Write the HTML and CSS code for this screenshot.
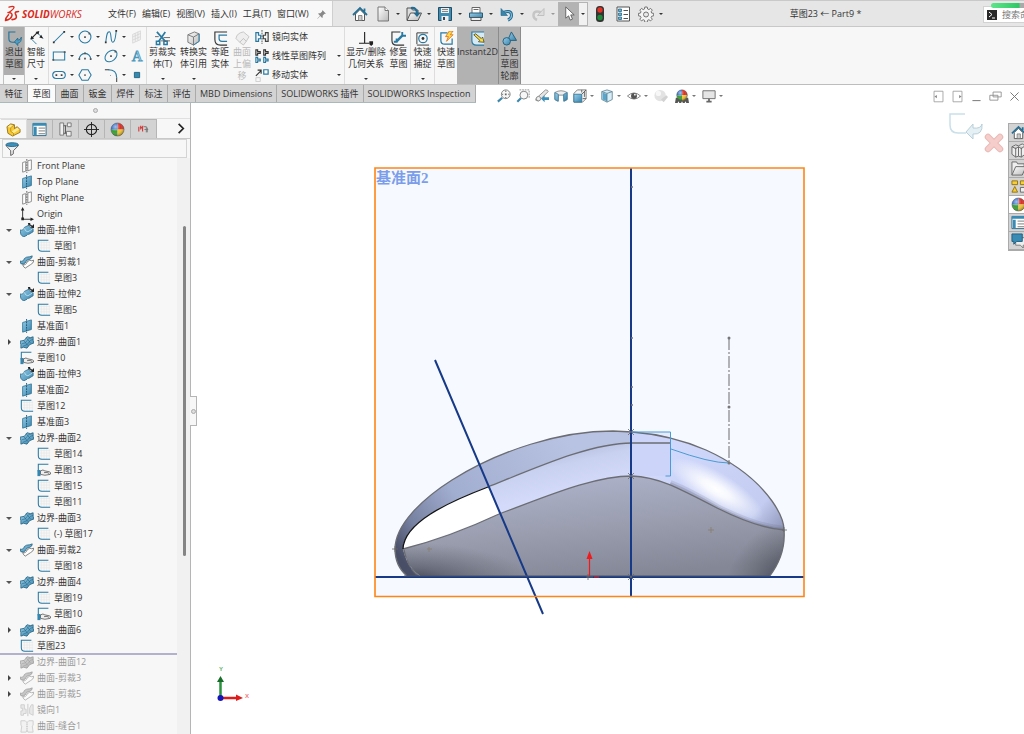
FILE: index.html
```html
<!DOCTYPE html>
<html lang="zh-CN">
<head>
<meta charset="utf-8">
<title>草图23 ← Part9 *</title>
<link rel="stylesheet" href="styles.css">
</head>
<body>
<svg class="sprite" aria-hidden="true">
  <defs>
    <linearGradient id="g-blue" x1="0" y1="0" x2="1" y2="1"><stop offset="0" stop-color="#9bcfea"/><stop offset="1" stop-color="#3783ab"/></linearGradient>
    <linearGradient id="g-grey" x1="0" y1="0" x2="1" y2="1"><stop offset="0" stop-color="#ffffff"/><stop offset="1" stop-color="#b9b9b9"/></linearGradient>
    <radialGradient id="g-shine" cx=".35" cy=".3" r=".75"><stop offset="0" stop-color="#fff" stop-opacity=".6"/><stop offset=".5" stop-color="#fff" stop-opacity="0"/><stop offset="1" stop-color="#000" stop-opacity=".4"/></radialGradient>
  </defs>
  <symbol id="ds" viewBox="0 0 16 18"><g fill="none" stroke="#d92a1c" stroke-linecap="round" stroke-linejoin="round"><path stroke-width="1.3" d="M5 2.200Q9 .8 10 2Q10.500 3.600 5 7.500"/><path stroke-width="1.500" d="M4 7.500Q8.500 7.500 8 10.500Q7 14.500 1.500 15.500Q1.500 13 4.500 9.800"/><path stroke-width="1.600" d="M14.500 6.500Q10.800 6.500 11.300 8.500L12.300 11Q13 14.500 8 14.600"/></g></symbol>
  <symbol id="home" viewBox="0 0 16 16"><path fill="#fff" stroke="#555" d="M3.500 8v6.500h9V8L8 3.500z"/><path fill="none" stroke="#256f94" stroke-width="1.800" d="M1 9l7-7 7 7M12.500 5.500V2.500"/><path fill="#ccc" stroke="#666" stroke-width=".7" d="M6.500 9.500h3.500v5H6.500z"/></symbol>
  <symbol id="new" viewBox="0 0 16 16"><path fill="url(#g-grey)" stroke="#777" d="M3 1h7l3.500 3.500V15H3z"/><path fill="#fff" stroke="#777" d="M10 1v3.500h3.500"/></symbol>
  <symbol id="open" viewBox="0 0 16 16"><path fill="#ddd" stroke="#555" d="M1 14V2h4l1.500 2H12v3"/><path fill="url(#g-grey)" stroke="#555" d="M1 14.500L4.500 7h11L12 14.500z"/><path fill="none" stroke="#236d94" stroke-width="2" d="M5 2q6-1 6 6"/><path fill="#236d94" d="M7.500 7h7L11 11z"/></symbol>
  <symbol id="save" viewBox="0 0 16 16"><path fill="#3f8cb0" stroke="#244e65" d="M1.500 1.500h13v13h-13z"/><path fill="#eee" d="M4 2h8v5H4zM4.500 10h7v5h-7z"/><path stroke="#888" d="M5 3.500h6M5 5.500h6"/><path fill="#345" d="M6 11h2v3H6z"/></symbol>
  <symbol id="print" viewBox="0 0 16 16"><path fill="#fff" stroke="#666" d="M4 7V1.500h8V7M5.500 3.500h5"/><path fill="url(#g-blue)" stroke="#285b75" d="M1.500 7h13v4.500h-13z"/><path fill="#eee" stroke="#555" d="M3 11.500h10v3H3z"/></symbol>
  <symbol id="undo" viewBox="0 0 16 16"><path fill="none" stroke="#20678c" stroke-width="3" d="M4.500 6.500q8-3 8 3q0 3-3.500 4.500"/><path fill="none" stroke="#7fbfe0" stroke-width="1.200" d="M4.500 6.500q8-3 8 3q0 3-3.500 4.500"/><path fill="#3984ab" stroke="#20678c" stroke-width=".6" d="M2 2.500v7h6.500z"/></symbol>
  <symbol id="redo" viewBox="0 0 16 16"><path fill="none" stroke="#c5c5c5" stroke-width="2.500" d="M11.500 6.500q-8-3-8 3q0 3 3.500 4.500"/><path fill="#ddd" stroke="#c0c0c0" d="M14 2.500v7H7.500z"/></symbol>
  <symbol id="cursor" viewBox="0 0 16 16"><path fill="#fff" stroke="#555" stroke-width=".9" d="M4 1v12l3-2.500 1.800 4.500 2.400-1L9.300 9.500H13z"/></symbol>
  <symbol id="traffic" viewBox="0 0 16 16"><rect x="4" y="0" width="8" height="16" rx="3.500" fill="#333"/><circle cx="8" cy="4" r="2.700" fill="#e43224"/><circle cx="8" cy="11.500" r="2.700" fill="#1c8b3a"/></symbol>
  <symbol id="list" viewBox="0 0 16 16"><path fill="#fff" stroke="#555" d="M2 1h12.500v14H2z"/><path fill="#73b3d0" stroke="#286a89" stroke-width=".8" d="M3.500 3h3v2.500h-3zM3.500 7h3v2.500h-3zM3.500 11h3v2.500h-3z"/><path stroke="#555" d="M8.500 4.500H13M8.500 8.500H13M8.500 12.500H13"/></symbol>
  <symbol id="gear" viewBox="0 0 16 16"><path fill="#f4f4f4" stroke="#666" stroke-width=".9" stroke-linejoin="round" d="M6.800 1h2.400l.4 2 1.300.6 1.700-1.200 1.700 1.700-1.200 1.700.6 1.300 2 .3v2.400l-2 .4-.6 1.300 1.200 1.700-1.700 1.700-1.700-1.200-1.300.6-.4 2H6.800l-.3-2-1.300-.6-1.700 1.200-1.700-1.700 1.200-1.700-.6-1.300-2-.4V7.400l2-.3.600-1.300-1.200-1.700 1.700-1.700 1.700 1.200 1.300-.6z"/><circle cx="8" cy="8.500" r="2.500" fill="#e8e8e8" stroke="#666" stroke-width=".9"/></symbol>
  <symbol id="pin" viewBox="0 0 16 16"><path fill="#888" d="M9 2l5 5-1 1-1-.3-3 3 .2 2.500-1 1-3-3L1 15.500.5 15l4.300-4.300-3-3 1-1 2.500.2 3-3L8 3z"/></symbol>
  <symbol id="exit" viewBox="0 0 16 16"><path fill="none" stroke="#21739c" stroke-width="1.200" d="M9 1H2v7q0 4 4 4h4"/><path fill="#4f9dc4" stroke="#1d658a" stroke-width=".8" d="M8 11.500l3.500-4v2.300q3 0 3.800-3.300.5 6-3.800 6.500v2.500z"/></symbol>
  <symbol id="dim" viewBox="0 0 16 16"><path fill="none" stroke="#2d7ba2" d="M2 8l6 6M8.500 1.500L15 8"/><path stroke="#222" stroke-width="1.200" d="M3 7.500l6-6"/><path fill="#222" d="M1.500 9l1-4 3 3zM11 0L7 1l3 3z"/><path fill="#222" d="M13 4l2 4-4-1z"/></symbol>
  <symbol id="line" viewBox="0 0 16 16"><path stroke="#287aa2" stroke-width="1.200" d="M2 14L14 2"/><path fill="#333" d="M1 13h2v2H1zM13 1h2v2h-2z"/></symbol>
  <symbol id="circle" viewBox="0 0 16 16"><circle cx="8" cy="8" r="6.800" fill="none" stroke="#287aa2" stroke-width="1.200"/><path fill="#555" d="M7 7h2v2H7zM12 3h2v2h-2z"/></symbol>
  <symbol id="spline" viewBox="0 0 16 16"><path fill="none" stroke="#287aa2" stroke-width="1.200" d="M2 14C3 7 3 2 6 2s1 12 4 12 3-6 4-13"/><path fill="#333" d="M1 13h2v2H1zM13 0h2v2h-2z"/></symbol>
  <symbol id="gridp" viewBox="0 0 16 16"><path fill="#f1f1f1" stroke="#d2d2d2" stroke-width=".8" d="M3 5l9-4v10l-9 4zM3 8l9-4M3 11.500l9-4M6 3.500v10M9 2v10"/></symbol>
  <symbol id="rect" viewBox="0 0 16 16"><path fill="none" stroke="#287aa2" stroke-width="1.200" d="M1.500 3.500h13v9h-13z"/><path fill="#555" d="M.5 11.500h2v2h-2zM13.500 2.500h2v2h-2z"/></symbol>
  <symbol id="arc" viewBox="0 0 16 16"><path fill="none" stroke="#287aa2" stroke-width="1.200" d="M1.500 11.500a6.500 6.500 0 0 1 13 0"/><path fill="#555" d="M.5 10.500h2v2h-2zM13.500 10.500h2v2h-2zM7 10h2v2H7zM7 4h2v2H7z"/></symbol>
  <symbol id="ellipse" viewBox="0 0 16 16"><ellipse cx="8" cy="8" rx="7.800" ry="5.500" fill="none" stroke="#287aa2" stroke-width="1.200" transform="rotate(-42 8 8)"/><path fill="#555" d="M7 7h2v2H7zM12 2h2v2h-2z"/></symbol>
  <symbol id="slot" viewBox="0 0 16 16"><rect x=".8" y="4" width="14.400" height="8" rx="4" fill="none" stroke="#287aa2" stroke-width="1.200"/><path fill="#444" d="M4 7h2v2H4zM10 7h2v2h-2z"/></symbol>
  <symbol id="hex" viewBox="0 0 16 16"><path fill="none" stroke="#287aa2" stroke-width="1.200" d="M4.500 2h7L15 8l-3.500 6h-7L1 8z"/><path fill="#777" d="M7 7h2v2H7z"/></symbol>
  <symbol id="fillet" viewBox="0 0 16 16"><path fill="none" stroke="#222" d="M1 2h5M14.500 11v5"/><path fill="none" stroke="#287aa2" stroke-width="1.200" d="M5 2q9.500 0 9.500 9"/><path fill="#999" d="M7 8h1v1H7z"/></symbol>
  <symbol id="point" viewBox="0 0 16 16"><path fill="#368aaf" stroke="#1e5f80" d="M5 5h6v6H5z"/></symbol>
  <symbol id="trim" viewBox="0 0 16 16"><path stroke="#287aa2" stroke-width="1.800" d="M2 1l9 10M11 1L4 11"/><path fill="none" stroke="#287aa2" stroke-width="1.600" d="M1.500 11h3.500v3.500H1.500zM9.500 11H13v3.500H9.500z"/><path stroke="#666" d="M0 6h4M9 7h7M6 10.500h10"/></symbol>
  <symbol id="cube" viewBox="0 0 16 16"><path fill="url(#g-grey)" stroke="#777" d="M2 4l7-3 5 2v8l-6 4-6-3z"/><path fill="none" stroke="#777" d="M2 4l6 2.500 6-3.500M8 6.500V15"/><path fill="none" stroke="#3187b1" d="M8 15l6-4V3"/></symbol>
  <symbol id="offset" viewBox="0 0 16 16"><path fill="none" stroke="#287aa2" stroke-width="1.300" d="M15 4.500H6.500V8q0 3 3 3H15"/><path fill="none" stroke="#333" stroke-width="1.200" d="M15 1H2v8q0 6 6 6h7"/></symbol>
  <symbol id="surfoff" viewBox="0 0 16 16"><path fill="#eee" stroke="#c4c4c4" d="M1 8q1-6 8-7l6 5-3 5-3-3-4 4zM5 12l4-4 3 3-3 4z"/></symbol>
  <symbol id="mirror" viewBox="0 0 16 16"><path stroke="#444" stroke-dasharray="2 1" d="M8 0v16"/><path fill="none" stroke="#287aa2" stroke-width="1.400" d="M1 3v10h3v-3h2.500V6H4V3z"/><path fill="none" stroke="#444" stroke-width="1.400" d="M15 3v10h-3v-3H9.500V6H12V3z"/></symbol>
  <symbol id="pattern" viewBox="0 0 16 16"><g fill="none" stroke-width="1.300"><path stroke="#333" d="M1 1h2v2h3v2H3v2H1zM10 1h2v2h3v2h-3v2h-2z"/><path stroke="#287aa2" d="M1 9.500h2v2h3v2H3v2H1zM10 9.500h2v2h3v2h-3v2h-2z"/></g></symbol>
  <symbol id="move" viewBox="0 0 16 16"><path fill="none" stroke="#333" stroke-width="1.300" d="M1 9l6-6M3 2.500h4v4"/><path fill="#fff" stroke="#287aa2" stroke-width="1.400" d="M10 2h5v5h-5z"/><path fill="none" stroke="#ccc" d="M1 11h5v4.500H1z"/></symbol>
  <symbol id="relation" viewBox="0 0 16 16"><path fill="none" stroke="#222" stroke-width="1.200" d="M6 1v12M0 13h11"/><path fill="#222" d="M11 11h4v3l-2 2-2-2z"/></symbol>
  <symbol id="repair" viewBox="0 0 16 16"><path fill="none" stroke="#333" stroke-width="1.200" d="M10 1H1v9q0 5 5 5h8"/><path stroke="#287aa2" stroke-width="2.500" d="M6 11l6-6"/><path fill="none" stroke="#287aa2" stroke-width="2" d="M12 1v4h4M6 8v3.500H3"/></symbol>
  <symbol id="snap" viewBox="0 0 16 16"><path fill="none" stroke="#333" d="M2 14V2h12M2 15h13"/><circle cx="8.500" cy="8" r="4.500" fill="none" stroke="#287aa2" stroke-width="1.300"/><circle cx="8.500" cy="8" r="1.500" fill="#333"/></symbol>
  <symbol id="rapid" viewBox="0 0 16 16"><path fill="none" stroke="#287aa2" stroke-width="1.300" d="M9 2H2v8q0 4 4 4h8V8"/><path fill="#ffd94a" stroke="#e07b1c" d="M11 0L7 6h3l-2 5 7-7h-3l3-4z"/></symbol>
  <symbol id="instant" viewBox="0 0 16 16"><path fill="#d7eaf4" stroke="#287aa2" stroke-width="1.200" d="M15 1H2v9q0 5 5 5h8"/><path fill="#ffe13b" stroke="#333" stroke-width=".8" d="M4 4l2-1 6 5 1.500-1.500L15 12l-6-.5L10.500 10z"/></symbol>
  <symbol id="shade" viewBox="0 0 16 16"><path fill="url(#g-blue)" stroke="#235e7c" d="M10 1l5.500 9H6z"/><circle cx="5" cy="11" r="4" fill="url(#g-blue)" stroke="#235e7c"/></symbol>
  <symbol id="zoomfit" viewBox="0 0 16 16"><circle cx="10" cy="6" r="5" fill="#f7f7f7" stroke="#777"/><path fill="#666" d="M9 3h2l-1-1.500zM9 9h2l-1 1.500zM7 5v2L5.500 6zM13 5v2l1.500-1zM9 5h2v2H9z"/><path stroke="#3c88ad" stroke-width="2.500" d="M6 10l-5 4.500"/></symbol>
  <symbol id="zoomarea" viewBox="0 0 16 16"><path fill="none" stroke="#888" stroke-dasharray="2 1" d="M4 1h11v10"/><circle cx="9" cy="7" r="4.500" fill="#f7f7f7" stroke="#777"/><path stroke="#3c88ad" stroke-width="2.500" d="M5.500 10.500l-4 4"/></symbol>
  <symbol id="prev" viewBox="0 0 16 16"><path fill="#e5e5e5" stroke="#888" d="M1 11L12 1q3 0 3 2l-9 9q-2 3-5 1z"/><circle cx="4" cy="11" r="2.500" fill="#eee" stroke="#888"/><path fill="#3e90b9" d="M7 11l4-4v2.500h5v3h-5V15z"/></symbol>
  <symbol id="section" viewBox="0 0 16 16"><path fill="#eee" stroke="#888" d="M1 4q7-4 14 0v8l-3 2-1-7H5l-1 7-3-2z"/><path fill="url(#g-blue)" stroke="#347a9e" stroke-width=".8" d="M1 4l4 2v8l-4-2zM11 6l4-2v8l-4 2z"/></symbol>
  <symbol id="view" viewBox="0 0 16 16"><path fill="#f4f4f4" stroke="#777" d="M5 1h10v10l-4 4H1V5z"/><path fill="url(#g-blue)" stroke="#347a9e" d="M1 6h9v9H1z"/><path fill="none" stroke="#555" d="M10 6l5-5M10 1v3M11 11h4M13 3v6"/></symbol>
  <symbol id="display" viewBox="0 0 16 16"><path fill="#d9edf6" stroke="#577d8f" stroke-width=".9" d="M2 3l6-2 6 2v9l-6 3-6-3z"/><path fill="#5aa5c8" d="M3 4l5 2v8l-5-2z"/><path fill="none" stroke="#577d8f" stroke-width=".9" d="M2 3l6 2 6-2M8 5v10"/></symbol>
  <symbol id="eye" viewBox="0 0 16 16"><path fill="#fff" stroke="#777" d="M.5 8Q8 1 15.500 8 8 15 .5 8z"/><circle cx="8" cy="8" r="3.400" fill="#555"/><circle cx="9" cy="6.500" r="1" fill="#fff"/></symbol>
  <symbol id="greyball" viewBox="0 0 16 16"><circle cx="7" cy="7.500" r="6.500" fill="#e3e3e3"/><circle cx="5" cy="5" r="3" fill="#f7f7f7"/><path fill="#d2d2d2" d="M8 12l6-5 2 2-5 6z"/></symbol>
  <symbol id="ball" viewBox="0 0 16 16"><path fill="#3a9e33" d="M8 8H1a7 7 0 0 0 7 7z"/><path fill="#da3028" d="M8 8V1a7 7 0 0 1 7 7z"/><path fill="#2864c5" d="M8 8H1a7 7 0 0 1 7-7z"/><path fill="#f2c633" d="M8 8v7a7 7 0 0 0 7-7z"/><circle cx="8" cy="8" r="7" fill="url(#g-shine)" stroke="#555" stroke-width=".5"/></symbol>
  <symbol id="scene" viewBox="0 0 16 16"><path fill="#555" d="M1 10h14l1 6h-3l-1-2-1 2H9l-1-2-1 2H5l-1-2-1 2H0z"/><use href="#ball" x="1" y="0" width="14" height="14"/></symbol>
  <symbol id="monitor" viewBox="0 0 16 16"><path fill="#e5e5e5" stroke="#666" d="M1 2h14v9H1z"/><path stroke="#666" stroke-width="2" d="M8 11v3M5 14.500h6"/></symbol>
  <symbol id="dockl" viewBox="0 0 16 16"><path fill="none" stroke="#999" d="M2.500 1.500h11v13h-11z"/><path fill="#888" d="M3 8l3-2v4z"/></symbol>
  <symbol id="dockr" viewBox="0 0 16 16"><path fill="none" stroke="#999" d="M2.500 1.500h11v13h-11z"/><path fill="#888" d="M13 8l-3-2v4z"/></symbol>
  <symbol id="min" viewBox="0 0 16 16"><path stroke="#888" stroke-width="1.400" d="M3 13h10"/></symbol>
  <symbol id="restore" viewBox="0 0 16 16"><path fill="#fff" stroke="#888" d="M5 2.500h10v6H5zM1 6.500h10v6H1z"/></symbol>
  <symbol id="close" viewBox="0 0 16 16"><path stroke="#777" stroke-width="1.200" d="M3 3l10 10M13 3L3 13"/></symbol>
  <symbol id="part" viewBox="0 0 16 16"><path fill="#f9c934" stroke="#8b6a12" stroke-width=".9" stroke-linejoin="round" d="M1 5l4-3 4 1v4l3-2 3 3v3l-8 4-5-3z"/><path fill="#ffeb94" d="M2 5l3-2 3 1-3 2zM6 10l6-4 2 2-6 4z"/><path fill="none" stroke="#a67f16" stroke-width=".7" d="M5 6v4l3 2v3M5 6l4-3"/></symbol>
  <symbol id="property" viewBox="0 0 16 16"><path fill="#fff" stroke="#286a89" d="M1 1.500h14v13H1z"/><path fill="#398bb4" d="M1 1h14v3H1zM2 5h3v9H2z"/><path stroke="#777" d="M7 6.500h7M7 9.500h7M7 12.500h7"/></symbol>
  <symbol id="config" viewBox="0 0 16 16"><path fill="#eee" stroke="#777" d="M2 1h4v13H2zM10 1h4v4h-4zM9 10h5v5H9z"/><path fill="none" stroke="#555" d="M6 4h3M6 12h3M8 4v8"/></symbol>
  <symbol id="target" viewBox="0 0 16 16"><circle cx="8" cy="8" r="5.500" fill="none" stroke="#222" stroke-width="1.200"/><path stroke="#222" d="M8 0v16M0 8h16"/></symbol>
  <symbol id="cam" viewBox="0 0 16 16"><path fill="none" stroke="#d83a3a" stroke-width="1.200" d="M3 5v5M5 4v4M5 7l2-2v5"/><path fill="none" stroke="#777" stroke-width="1" d="M8 5h3v6M12 6v5M9 8h4"/></symbol>
  <symbol id="filter" viewBox="0 0 16 16"><path fill="#eee" stroke="#555" d="M1 4l5.500 6v5.500l3-2V10L15.500 4z"/><ellipse cx="8.200" cy="3" rx="7" ry="2.200" fill="#3b91bb" stroke="#256687"/></symbol>
  <symbol id="plane" viewBox="0 0 16 16"><path fill="#fff" stroke="#777" stroke-width=".9" d="M3 4l3.500-1v11L3 15zM9 2l4-1v11l-4 1.500z"/><path stroke="#555" stroke-dasharray="2 1" d="M7.800 0v16"/></symbol>
  <symbol id="planeb" viewBox="0 0 16 16"><path fill="url(#g-blue)" stroke="#286f92" stroke-width=".9" d="M3 4l10-3v11L3 15z"/><path stroke="#174f6d" stroke-dasharray="2 1" d="M7.500 0v16"/></symbol>
  <symbol id="origin" viewBox="0 0 16 16"><path fill="none" stroke="#222" d="M3 3v11h10"/><path fill="#222" d="M1 4l2-4 2 4zM12 12l4 2-4 2zM1.500 12h3v3h-3z"/></symbol>
  <symbol id="extrude" viewBox="0 0 16 16"><path fill="url(#g-blue)" stroke="#2b6a8a" stroke-width=".9" stroke-linejoin="round" d="M0 8q4 1 5-3l6-3q-1 3 4 5v3l-5 3q-1-1-2 1l-4 2q-4-2-4-8z"/><path fill="none" stroke="#b5dff1" d="M5 6q1 4 4 4l5-3"/><path stroke="#222" stroke-width="1.300" d="M10 1l4 3"/><path fill="#222" d="M9 0h3l-2 3zM16 1v5l-4-1z"/></symbol>
  <symbol id="boundary" viewBox="0 0 16 16"><path fill="url(#g-blue)" stroke="#215f7e" stroke-width=".9" stroke-linejoin="round" d="M0 7l5-1 3-4 4 1 3-1v4l1 3-5 2-3 4-4-1-3 1v-4z"/><path fill="none" stroke="#205e7f" stroke-width=".6" d="M4 6l5 6M7 3l5 6M2 10l4-1 4-5 4-1M3 13l5-2 4-5 3-1"/></symbol>
  <symbol id="surftrim" viewBox="0 0 16 16"><path fill="#fff" stroke="#666" stroke-width=".9" stroke-linejoin="round" d="M3 11q4 1 5-3l3-2q2 1 5 0-1 4-4 5l-6 4q-2-1-3-4z"/><path fill="url(#g-blue)" stroke="#215f7e" stroke-width=".9" stroke-linejoin="round" d="M0 7q4 1 5-3 2-2 6-2l3-1q0 3-3 4-4 0-5 4-2 2-5 1z"/></symbol>
  <symbol id="sketch" viewBox="0 0 16 16"><path fill="none" stroke="#e6e6e6" stroke-width=".7" d="M5 2v12M8 2v12M11 2v12M14 2v12M3 4h12M3 7h12M3 10h12"/><path fill="none" stroke="#287aa2" stroke-width="1.200" d="M13 1.500H1.500V10q0 4 4 4H15"/></symbol>
  <symbol id="shared" viewBox="0 0 16 16"><path fill="none" stroke="#287aa2" stroke-width="1.200" d="M13 1.500H1.500V10"/><path fill="#3187b1" d="M.5 8H4v7H.5z"/><path fill="#eee" stroke="#555" stroke-width=".9" d="M4 9q3-2 5 0l5 1q3 1 1 3l-6 1-5-1zM8 11q4-1 6 1"/></symbol>
  <symbol id="mirrorf" viewBox="0 0 16 16"><path fill="#ddd" stroke="#aaa" d="M1 2h4v5h2v5H4v2H1V9h2V6H1zM15 2h-2l-2 4v6l4 2z"/><path stroke="#999" d="M9 1v14"/></symbol>
  <symbol id="knit" viewBox="0 0 16 16"><path fill="#eee" stroke="#aaa" d="M1 2h5l2 2 2-2h5v5l-1 1 1 7H9l-1-2-1 2H1l1-7-1-1z"/><path stroke="#aaa" stroke-dasharray="1 1" stroke-width="2" d="M8 4v10"/></symbol>
  <symbol id="library" viewBox="0 0 16 16"><path fill="#eee" stroke="#666" d="M1 4l4-2 3 1 4-2 3 2v9l-4 3-3-1-3 1-4-3zM5 5v10M8 4v10M11 5v10M1 4l4 2 3-2 3 2 4-3"/></symbol>
  <symbol id="folder" viewBox="0 0 16 16"><path fill="#eee" stroke="#666" d="M1 15V1h5l1 2h7v3"/><path fill="url(#g-grey)" stroke="#666" d="M1 15L5 6h11l-4 9z"/></symbol>
  <symbol id="palette" viewBox="0 0 16 16"><path fill="#f7ce38" stroke="#91710b" d="M1 2h6v4H1zM10 2h6v4h-6zM4 8l3 6H1z"/><path fill="#eee" stroke="#666" d="M10 9h6v5h-6z"/></symbol>
  <symbol id="forum" viewBox="0 0 16 16"><path fill="#eee" stroke="#777" d="M5 5h11v8h-3v3l-3-3H5z"/><path fill="#398bb4" stroke="#205e7e" d="M1 1h11v8H6l-3 3V9H1z"/></symbol>
</svg>

<header class="titlebar">
  <div class="brand">
    <svg class="ds-logo" role="img" aria-label="DS"><use href="#ds"/></svg>
    <span class="wordmark"><b>SOLID</b>WORKS</span>
    <nav class="menu">
      <button>文件(F)</button><button>编辑(E)</button><button>视图(V)</button><button>插入(I)</button><button>工具(T)</button><button>窗口(W)</button>
    </nav>
    <button class="pin" aria-label="固定"><svg><use href="#pin"/></svg></button>
  </div>
  <div class="quick">
    <button class="tool home" aria-label="主页"><svg><use href="#home"/></svg></button>
    <button class="tool drop" aria-label="新建"><svg><use href="#new"/></svg></button>
    <button class="tool drop" aria-label="打开"><svg><use href="#open"/></svg></button>
    <button class="tool drop" aria-label="保存"><svg><use href="#save"/></svg></button>
    <button class="tool drop" aria-label="打印"><svg><use href="#print"/></svg></button>
    <button class="tool drop" aria-label="撤销"><svg><use href="#undo"/></svg></button>
    <button class="tool drop faded" aria-label="重做" disabled><svg><use href="#redo"/></svg></button>
    <button class="pick" aria-label="选择"><span class="pick-face"><svg><use href="#cursor"/></svg></span></button>
    <button class="tool spaced" aria-label="重建模型"><svg><use href="#traffic"/></svg></button>
    <button class="tool spaced" aria-label="文件属性"><svg><use href="#list"/></svg></button>
    <button class="tool drop" aria-label="选项"><svg><use href="#gear"/></svg></button>
  </div>
  <h1 class="doc-title">草图23 ← Part9 *</h1>
  <div class="search">
    <span class="progress"></span>
    <label for="search" aria-label="搜索命令"><svg viewBox="0 0 10 10"><path fill="#282828" d="M0 0h10v10H0z"/><path fill="none" stroke="#fff" d="M2 2l3 2.500L2 7M5 8h3"/></svg></label>
    <input id="search" type="text" placeholder="搜索命令">
  </div>
</header>

<div class="ribbon">
  <button class="cmd narrow split-on drop-down"><svg><use href="#exit"/></svg><span>退出<br>草图</span></button>
  <button class="cmd narrow drop-down"><svg><use href="#dim"/></svg><span>智能<br>尺寸</span></button>
  <div class="sketch-tools">
    <button class="drop" aria-label="直线"><svg><use href="#line"/></svg></button>
    <button class="drop" aria-label="圆"><svg><use href="#circle"/></svg></button>
    <button class="drop" aria-label="样条曲线"><svg><use href="#spline"/></svg></button>
    <button aria-label="基准面"><svg><use href="#gridp"/></svg></button>
    <button class="drop" aria-label="矩形"><svg><use href="#rect"/></svg></button>
    <button class="drop" aria-label="圆弧"><svg><use href="#arc"/></svg></button>
    <button class="drop" aria-label="椭圆"><svg><use href="#ellipse"/></svg></button>
    <button class="letter" aria-label="文字"><svg viewBox="0 0 16 16"><text x="8" y="14" text-anchor="middle">A</text></svg></button>
    <button class="drop" aria-label="槽口"><svg><use href="#slot"/></svg></button>
    <button aria-label="多边形"><svg><use href="#hex"/></svg></button>
    <button class="drop" aria-label="圆角"><svg><use href="#fillet"/></svg></button>
    <button aria-label="点"><svg><use href="#point"/></svg></button>
  </div>
  <button class="cmd medium drop-down"><svg><use href="#trim"/></svg><span>剪裁实<br>体(T)</span></button>
  <button class="cmd medium drop-down"><svg><use href="#cube"/></svg><span>转换实<br>体引用</span></button>
  <button class="cmd narrow"><svg><use href="#offset"/></svg><span>等距<br>实体</span></button>
  <button class="cmd narrow off" disabled><svg><use href="#surfoff"/></svg><span>曲面<br>上偏<br>移</span></button>
  <div class="stack">
    <button><svg><use href="#mirror"/></svg><span>镜向实体</span></button>
    <button class="drop"><svg><use href="#pattern"/></svg><span>线性草图阵列</span></button>
    <button class="drop"><svg><use href="#move"/></svg><span>移动实体</span></button>
  </div>
  <button class="cmd wide drop-down"><svg><use href="#relation"/></svg><span>显示/删除<br>几何关系</span></button>
  <button class="cmd narrow ruled"><svg><use href="#repair"/></svg><span>修复<br>草图</span></button>
  <button class="cmd narrow ruled drop-down"><svg><use href="#snap"/></svg><span>快速<br>捕捉</span></button>
  <button class="cmd narrow"><svg><use href="#rapid"/></svg><span>快速<br>草图</span></button>
  <button class="cmd wide on"><svg><use href="#instant"/></svg><span>Instant2D</span></button>
  <button class="cmd narrow on"><svg><use href="#shade"/></svg><span>上色<br>草图<br>轮廓</span></button>
</div>

<div class="tab-row">
  <nav class="tabs">
    <button>特征</button><button class="active">草图</button><button>曲面</button><button>钣金</button><button>焊件</button><button>标注</button><button>评估</button><button>MBD Dimensions</button><button>SOLIDWORKS 插件</button><button>SOLIDWORKS Inspection</button>
  </nav>
  <div class="hud">
    <button aria-label="整屏显示全图"><svg><use href="#zoomfit"/></svg></button>
    <button aria-label="局部放大"><svg><use href="#zoomarea"/></svg></button>
    <button aria-label="上一视图"><svg><use href="#prev"/></svg></button>
    <button aria-label="剖面视图"><svg><use href="#section"/></svg></button>
    <button class="drop" aria-label="视图定向"><svg><use href="#view"/></svg></button>
    <button class="drop" aria-label="显示样式"><svg><use href="#display"/></svg></button>
    <button class="drop" aria-label="隐藏项目"><svg><use href="#eye"/></svg></button>
    <button class="look" aria-label="编辑外观"><svg><use href="#greyball"/></svg></button>
    <button class="drop" aria-label="应用布景"><svg><use href="#scene"/></svg></button>
    <button class="drop" aria-label="视图设定"><svg><use href="#monitor"/></svg></button>
  </div>
  <div class="window-buttons">
    <button aria-label="左侧"><svg><use href="#dockl"/></svg></button>
    <button aria-label="右侧"><svg><use href="#dockr"/></svg></button>
    <button aria-label="最小化"><svg><use href="#min"/></svg></button>
    <button aria-label="还原"><svg><use href="#restore"/></svg></button>
    <button aria-label="关闭"><svg><use href="#close"/></svg></button>
  </div>
</div>

<main class="workspace">
  <aside class="panel">
    <div class="grip"><i class="dot"></i></div>
    <div class="panel-tabs">
      <button class="active" aria-label="设计树"><svg><use href="#part"/></svg></button>
      <button aria-label="属性"><svg><use href="#property"/></svg></button>
      <button aria-label="配置"><svg><use href="#config"/></svg></button>
      <button aria-label="尺寸专家"><svg><use href="#target"/></svg></button>
      <button aria-label="外观"><svg><use href="#ball"/></svg></button>
      <button aria-label="加工"><svg><use href="#cam"/></svg></button>
      <button class="more" aria-label="更多"><svg viewBox="0 0 16 16"><path fill="none" stroke="#222" stroke-width="1.800" d="M6 3l5 5-5 5"/></svg></button>
    </div>
    <div class="filter"><label for="filter"><svg><use href="#filter"/></svg></label><input id="filter" type="text" aria-label="过滤"></div>
    <div class="tree-area">
      <ul class="tree">
        <li><svg><use href="#plane"/></svg>Front Plane</li>
        <li><svg><use href="#planeb"/></svg>Top Plane</li>
        <li><svg><use href="#plane"/></svg>Right Plane</li>
        <li><svg><use href="#origin"/></svg>Origin</li>
        <li class="opened"><svg><use href="#extrude"/></svg>曲面-拉伸1</li>
        <li class="child"><svg><use href="#sketch"/></svg>草图1</li>
        <li class="opened"><svg><use href="#surftrim"/></svg>曲面-剪裁1</li>
        <li class="child"><svg><use href="#sketch"/></svg>草图3</li>
        <li class="opened"><svg><use href="#extrude"/></svg>曲面-拉伸2</li>
        <li class="child"><svg><use href="#sketch"/></svg>草图5</li>
        <li><svg><use href="#planeb"/></svg>基准面1</li>
        <li class="closed"><svg><use href="#boundary"/></svg>边界-曲面1</li>
        <li><svg><use href="#shared"/></svg>草图10</li>
        <li><svg><use href="#extrude"/></svg>曲面-拉伸3</li>
        <li><svg><use href="#planeb"/></svg>基准面2</li>
        <li><svg><use href="#sketch"/></svg>草图12</li>
        <li><svg><use href="#planeb"/></svg>基准面3</li>
        <li class="opened"><svg><use href="#boundary"/></svg>边界-曲面2</li>
        <li class="child"><svg><use href="#sketch"/></svg>草图14</li>
        <li class="child"><svg><use href="#shared"/></svg>草图13</li>
        <li class="child"><svg><use href="#sketch"/></svg>草图15</li>
        <li class="child"><svg><use href="#sketch"/></svg>草图11</li>
        <li class="opened"><svg><use href="#boundary"/></svg>边界-曲面3</li>
        <li class="child"><svg><use href="#sketch"/></svg>(-) 草图17</li>
        <li class="opened"><svg><use href="#surftrim"/></svg>曲面-剪裁2</li>
        <li class="child"><svg><use href="#sketch"/></svg>草图18</li>
        <li class="opened"><svg><use href="#boundary"/></svg>边界-曲面4</li>
        <li class="child"><svg><use href="#sketch"/></svg>草图19</li>
        <li class="child"><svg><use href="#shared"/></svg>草图10</li>
        <li class="closed"><svg><use href="#boundary"/></svg>边界-曲面6</li>
        <li class="rollback"><svg><use href="#sketch"/></svg>草图23</li>
        <li class="suppressed"><svg><use href="#boundary"/></svg>边界-曲面12</li>
        <li class="closed suppressed"><svg><use href="#surftrim"/></svg>曲面-剪裁3</li>
        <li class="closed suppressed"><svg><use href="#surftrim"/></svg>曲面-剪裁5</li>
        <li class="suppressed"><svg><use href="#mirrorf"/></svg>镜向1</li>
        <li class="suppressed"><svg><use href="#knit"/></svg>曲面-缝合1</li>
      </ul>
      <div class="scrollbar"><span class="thumb"></span></div>
    </div>
  </aside>

  <section class="viewport">
    <button class="splitter" aria-label="折叠面板"><i class="dot"></i></button>
    <svg class="model" viewBox="191 103 833 631" preserveAspectRatio="xMinYMin meet" role="img" aria-label="零件模型">
      <defs>
        <linearGradient id="top" gradientUnits="userSpaceOnUse" x1="395" y1="550" x2="560" y2="430"><stop offset="0" stop-color="#484e66"/><stop offset=".15" stop-color="#7781a2"/><stop offset=".4" stop-color="#a2aed0"/><stop offset="1" stop-color="#b8c2e2"/></linearGradient>
        <linearGradient id="band" gradientUnits="userSpaceOnUse" x1="590" y1="440" x2="600" y2="484"><stop offset="0" stop-color="#b1bbdc"/><stop offset=".4" stop-color="#c9d1f0"/><stop offset="1" stop-color="#d3dafa"/></linearGradient>
        <linearGradient id="side" gradientUnits="userSpaceOnUse" x1="600" y1="475" x2="610" y2="578"><stop offset="0" stop-color="#adb1c9"/><stop offset=".5" stop-color="#999dae"/><stop offset="1" stop-color="#838796"/></linearGradient>
        <radialGradient id="dark-left" gradientUnits="userSpaceOnUse" cx="0" cy="0" r="1" gradientTransform="translate(404 584) scale(130 42)"><stop offset="0" stop-color="#22242e" stop-opacity=".85"/><stop offset=".4" stop-color="#3a3d4a" stop-opacity=".45"/><stop offset="1" stop-color="#555" stop-opacity="0"/></radialGradient>
        <radialGradient id="dark-right" gradientUnits="userSpaceOnUse" cx="0" cy="0" r="1" gradientTransform="translate(790 584) rotate(-50) scale(75 60)"><stop offset="0" stop-color="#22242e" stop-opacity=".9"/><stop offset=".4" stop-color="#3a3d4a" stop-opacity=".5"/><stop offset="1" stop-color="#555" stop-opacity="0"/></radialGradient>
        <radialGradient id="glow"><stop offset="0" stop-color="#fff"/><stop offset=".3" stop-color="#fff" stop-opacity=".85"/><stop offset="1" stop-color="#fff" stop-opacity="0"/></radialGradient>
        <linearGradient id="tail" gradientUnits="userSpaceOnUse" x1="680" y1="440" x2="786" y2="530"><stop offset="0" stop-color="#d0d8fb"/><stop offset=".75" stop-color="#c4cdf1"/><stop offset="1" stop-color="#8991b3"/></linearGradient>
        <clipPath id="tail-clip"><path d="M632 432Q671 435 706 450Q750 470 772 501Q784 518 784 530Q757 528 717 508C675 486 657 478 632 476z"/></clipPath>
      </defs>
      <path fill="#f6f9ff" d="M375 168h429v428H375z"/>
      <text class="plane-name" x="376" y="183">基准面2</text>
      <path fill="url(#top)" d="M407 576Q395 566 395 549C395 525 422 499 452 480C500 450 560 431 613 431L632 432Q655 433 671 438V443H632C592 443 540 466 488 487C446 503 404 523 403 549Q408 570 422 577z"/>
      <path fill="url(#band)" d="M488 487C540 466 592 443 632 443H671L680 490Q657 476 632 476C592 476 543 498 499 514z"/>
      <path fill="url(#tail)" d="M632 432Q671 435 706 450Q750 470 772 501Q784 518 784 530Q757 528 717 508C675 486 657 478 632 476z"/>
      <g clip-path="url(#tail-clip)">
        <ellipse cx="716" cy="489" rx="54" ry="17" fill="url(#glow)" transform="rotate(31 716 489)"/>
        <path fill="none" stroke="#5b6077" stroke-width="8" opacity=".16" d="M670 484Q690 492 717 508Q757 528 784 530"/>
        <path fill="none" stroke="#5b6077" stroke-width="4" opacity=".25" d="M670 484Q690 492 717 508Q757 528 784 530"/>
      </g>
      <path fill="#fff" d="M403 549C404 523 446 503 488 487L499 514Q450 534 403 549z"/>
      <path id="body-side" d="M403 549Q450 537 499 514C543 498 592 476 632 476C657 477 675 486 717 508Q757 528 784 530Q786 555 769 577H422Q407 568 403 549z" fill="url(#side)"/>
      <path fill="url(#dark-left)" d="M403 549Q450 537 499 514C543 498 592 476 632 476V577H422Q407 568 403 549z"/>
      <path fill="url(#dark-right)" d="M632 476C657 477 675 486 717 508Q757 528 784 530Q786 555 769 577H632z"/>
      <path fill="#c8cefa" opacity=".35" d="M632 432h38v44h-38z"/>
      <g fill="none" stroke="#6b6d72" stroke-width="1.300">
        <path d="M407 576Q395 566 395 549C395 525 422 499 452 480C500 450 560 431 613 431L632 432Q671 435 706 450Q750 470 772 501Q784 518 784 530Q786 555 769 577"/>
        <path d="M488 487C540 466 592 443 632 443H671"/>
        <path d="M403 549Q450 537 499 514C543 498 592 476 632 476C657 477 675 486 717 508Q757 528 784 530"/>
        <path stroke-dasharray="8 2" d="M404 550Q408 569 420 577"/>
        <path stroke="#8b8d91" stroke-dasharray="12 2 2 2" d="M729 338v125"/>
      </g>
      <path fill="none" stroke="#111" stroke-width="1.300" d="M403 549C404 523 446 503 488 487"/>
      <path fill="none" stroke="#499bd4" d="M632 432h38.500v44h-5M671 449Q710 463 729 463"/>
      <path fill="none" stroke="#8a8178" d="M708 530h6M711 527v6M429 547v5M427 549h5"/>
      <g stroke="#163a87" stroke-width="2"><path d="M375 577h429M631 168v428M435 360l108 254"/></g>
      <path stroke="#4e5360" d="M404 576h366"/>
      <path fill="none" stroke="#666" stroke-width=".8" d="M628 429l6 6M634 429l-6 6M628 473l6 6M634 473l-6 6M628 574l6 6M634 574l-6 6M392 549h6M395 546v6M782 530h5M784 527v5M586 577h7M588 574v6"/>
      <g fill="#777"><circle cx="729" cy="338" r="1.500"/><circle cx="729" cy="407" r="1.500"/><circle cx="729" cy="463" r="1.500"/><circle cx="632" cy="187" r="1"/><circle cx="632" cy="338" r="1"/><circle cx="632" cy="387" r="1"/><circle cx="632" cy="405" r="1"/></g>
      <path fill="none" stroke="#ff8516" stroke-width="1.600" d="M375 168h429v428.500H375z"/>
      <path stroke="#f11919" stroke-width="1.200" d="M589.500 576v-18M594 577h5"/><path fill="#f11919" d="M586.500 559h6l-3-8z"/>
      <path stroke="#29923c" stroke-width="2.500" d="M220.500 697v-15"/><path fill="#176e29" d="M217 682h7l-3.500-6z"/><path stroke="#df1c1c" stroke-width="2.500" d="M221 698h16"/><path fill="#df1c1c" d="M236 694.500l7 3.500-7 3z"/><circle cx="220.500" cy="698" r="3" fill="#1515bc"/>
      <text class="axis axis-y" x="219" y="671">Y</text><text class="axis axis-x" x="245" y="698">X</text>
    </svg>
    <div class="confirm">
      <button class="accept" aria-label="退出草图"><svg viewBox="0 0 36 28"><path fill="none" stroke="#c9dfea" stroke-width="1.500" d="M17 2H2v11q0 8 8 8h8"/><path fill="#e5f0f5" stroke="#b9cfda" d="M18 20l7-8v4q8 1 9-4 1 11-9 10v5z"/></svg></button>
      <button class="cancel" aria-label="取消"><svg viewBox="0 0 20 20"><path stroke="#e8b9b6" stroke-width="6.500" stroke-linecap="round" d="M4 4l12 12M16 4L4 16"/><path stroke="#f5cecb" stroke-width="4.500" stroke-linecap="round" d="M4 4l12 12M16 4L4 16"/></svg></button>
    </div>
    <nav class="taskpane">
      <button aria-label="资源"><svg><use href="#home"/></svg></button>
      <button aria-label="设计库"><svg><use href="#library"/></svg></button>
      <button aria-label="文件探索器"><svg><use href="#folder"/></svg></button>
      <button aria-label="视图调色板"><svg><use href="#palette"/></svg></button>
      <button class="active" aria-label="外观布景"><svg><use href="#ball"/></svg></button>
      <button aria-label="自定义属性"><svg><use href="#property"/></svg></button>
      <button aria-label="论坛"><svg><use href="#forum"/></svg></button>
    </nav>
  </section>
</main>
</body>
</html>
```
FILE: styles.css
```css
*, *::before, *::after { box-sizing: border-box; }

body {
  margin: 0;
  height: 100vh;
  display: flex;
  flex-direction: column;
  overflow: hidden;
  background: #fff;
  color: #333;
  font: 9px/12px "Open Sans", "Noto Sans CJK SC", sans-serif;
}

button {
  margin: 0;
  padding: 0;
  border: 0;
  background: none;
  color: inherit;
  font: inherit;
}

svg { display: block; flex: none; }
.sprite { position: absolute; width: 0; height: 0; }

/* Buttons that open a menu carry a small triangle */
.drop { display: flex; align-items: center; }
.drop::after,
.drop-down::after,
.pick::after {
  content: "";
  flex: none;
  border: 2px solid transparent;
  border-top-color: #333;
  border-bottom-width: 0;
}

/* Title bar */
.titlebar {
  flex: none;
  display: flex;
  height: 27px;
  border-top: 1px solid #c9c9c9;
  border-bottom: 1px solid #c8c8c8;
  background: #e6e6e6;
}
.brand {
  flex: none;
  display: flex;
  align-items: center;
  width: 333px;
  padding-left: 4px;
  border-right: 1px solid #cfcfcf;
  background: #f8f8f8;
}
.ds-logo { width: 16px; height: 18px; }
.wordmark { flex: none; width: 64px; margin-left: 2px; color: #d92a1c; font-size: 10px; font-style: italic; }
.menu { flex: none; display: flex; gap: 6px; margin-left: 22px; white-space: nowrap; }
.pin { margin: 0 5px 0 auto; }
.pin svg { width: 10px; height: 10px; }

.quick { flex: none; display: flex; align-items: center; padding-left: 18px; }
.tool svg { width: 16px; height: 16px; margin: 0 1px; }
.tool.drop { width: 31px; gap: 4px; }
.home { margin-right: 5px; }
.tool.faded { width: 29px; }
.faded::after { border-top-color: #999; }
.spaced { margin-right: 5px; }
.pick {
  display: flex;
  align-items: center;
  width: 30px;
  height: 24px;
  margin-right: 3px;
  border: 1px solid #b4b4b4;
  background: #f1f1f1;
}
.pick-face { display: grid; place-items: center; width: 20px; height: 100%; background: #b3b3b3; }
.pick-face svg { width: 15px; height: 15px; }
.pick::after { margin: 0 auto; }

.doc-title { flex: 1; margin: 0; align-self: center; text-align: center; font: inherit; }
.search {
  position: relative;
  flex: none;
  display: flex;
  align-items: center;
  width: 41px;
  height: 17px;
  margin-top: 5px;
  padding-left: 3px;
  border: 1px solid #d2d2d2;
  border-right: 0;
  background: #fff;
}
.progress { position: absolute; top: -4px; left: 7px; width: 34px; height: 5px; border-radius: 3px 0 0 3px; background: linear-gradient(90deg, #5fe58b, #2ec866 28px, #aaa 29px); }
.search svg { width: 10px; height: 10px; }
.search input { flex: none; width: 48px; padding: 0 0 0 5px; border: 0; background: none; font: inherit; }
.search input::placeholder { color: #777; }

/* Ribbon */
.ribbon { flex: none; display: flex; height: 58px; padding-left: 3px; border-bottom: 1px solid #bdbdbd; background: #f7f7f7; }
.cmd {
  flex: none;
  display: flex;
  flex-direction: column;
  align-items: center;
  padding-top: 4px;
  white-space: nowrap;
}
.cmd svg { width: 15px; height: 15px; }
.drop-down::after { margin: auto 0 4px; }
.narrow { width: 22px; }
.medium { width: 31px; }
.wide { width: 42px; }
.ruled { width: 24px; border-right: 1px solid #ddd; }
.on { border-right: 1px solid #8c8c8c; background: #b2b2b2; }
.split-on { background: linear-gradient(#aeaeae 48px, #f7f7f7 48px); border: 1px solid #c0c0c0; border-width: 0 1px; }
.off { color: #b9b9b9; }

.sketch-tools {
  display: grid;
  grid-template-columns: repeat(3, 26px) 18px;
  grid-template-rows: repeat(3, 19px);
  align-items: center;
  margin-left: 1px;
  padding-left: 1px;
  border: solid #ddd;
  border-width: 0 1px;
}
.sketch-tools svg { width: 14px; height: 14px; margin: 0 2px; }
.sketch-tools .drop { gap: 2px; }
.letter text { font: 17px "Liberation Serif", serif; fill: #eef7fb; stroke: #4b98bd; stroke-width: 1; }

.stack { display: grid; grid-template-rows: repeat(3, 19px); width: 92px; border-right: 1px solid #ddd; }
.stack button { display: flex; align-items: center; gap: 3px; padding: 0 3px 0 2px; white-space: nowrap; }
.stack svg { width: 14px; height: 14px; }
.stack .drop::after { margin-left: auto; }

/* Command tabs and view toolbar */
.tab-row { flex: none; display: flex; height: 18px; }
.tabs { flex: none; display: flex; border-bottom: 1px solid #a9b8b8; }
.tabs button { min-width: 28px; padding: 1px 4px 0; border-right: 1px solid #aaa; background: #d3d3d3; white-space: nowrap; }
.tabs .active { background: #fbfbfb; }
.hud { display: flex; align-items: center; gap: 1px; margin-left: 19px; padding-top: 4px; }
.hud svg { width: 14px; height: 14px; margin: 0 2px; }
.hud .drop { width: 26px; gap: 1px; }
.hud .drop::after { border-top-color: #777; }
.hud .look { margin-right: 2px; }
.window-buttons { display: flex; align-items: center; margin-left: auto; padding-top: 4px; }
.window-buttons svg { width: 13px; height: 13px; margin: 0 3px; }

/* Feature tree */
.workspace { flex: 1; min-height: 0; display: flex; }
.panel { flex: none; display: flex; flex-direction: column; width: 191px; border-right: 1px solid #b5b5b5; background: #f7f7f7; }
.grip { flex: none; display: grid; place-items: center; height: 16px; border-bottom: 1px solid #e0e0e0; }
.dot { width: 5px; height: 5px; border: 1px solid #aaa; border-radius: 50%; background: #ddd; }
.panel-tabs { flex: none; display: flex; height: 20px; padding-left: 1px; border-bottom: 1px solid #c8c8c8; }
.panel-tabs button { display: grid; place-items: center; width: 26px; border: solid #b5b5b5; border-width: 1px 1px 0 0; background: #d3d3d3; }
.panel-tabs svg { width: 15px; height: 15px; }
.panel-tabs .active { background: #f7f7f7; border-color: #ddd; }
.panel-tabs .more { width: 20px; margin-left: auto; border: 0; background: none; }
.filter { flex: none; display: flex; align-items: center; height: 19px; margin: 0 3px 0 2px; border: 1px solid #d4d4d4; }
.filter svg { width: 14px; height: 14px; margin-left: 2px; }
.filter input { flex: 1; min-width: 0; border: 0; background: none; font: inherit; }
.tree-area { flex: 1; min-height: 0; display: flex; }
.tree { flex: 1; margin: 0; padding: 0; overflow: hidden; list-style: none; }
.tree li { display: flex; align-items: center; gap: 3px; height: 16px; padding-left: 20px; white-space: nowrap; }
.tree li.child { padding-left: 37px; }
.tree svg { width: 14px; height: 14px; }
.tree .opened, .tree .closed { padding-left: 6px; }
.opened::before { content: ""; width: 6px; margin-right: 5px; border: 3px solid transparent; border-top-color: #555; border-bottom-width: 0; }
.closed::before { content: ""; width: 3px; margin: 0 6px 0 2px; border: 3px solid transparent; border-left-color: #444; border-right-width: 0; }
.tree .rollback { height: 15px; border-bottom: 2px solid #b2b2cf; box-sizing: content-box; margin-bottom: -1px; }
.suppressed { color: #999; }
.suppressed svg { filter: grayscale(1); opacity: .55; }
.scrollbar { flex: none; width: 13px; padding: 68px 4px 0 6px; background: #f1f1f1; }
.thumb { display: block; height: 330px; border-radius: 2px; background: #858585; }

/* Graphics area */
.viewport { position: relative; flex: 1; min-width: 0; }
.model { width: 100%; aspect-ratio: 833 / 631; }
.plane-name { font: bold 15px "Liberation Serif", "Noto Sans CJK SC", serif; fill: #7c9eea; }
.axis { font: bold 6px "Liberation Sans", sans-serif; }
.axis-y { fill: #5bb365; }
.axis-x { fill: #f07878; }
.splitter { position: absolute; top: 293px; left: -1px; display: grid; place-items: center; width: 7px; height: 30px; border: 1px solid #b5b5b5; border-left: 0; background: #f7f7f7; }
.confirm { position: absolute; top: 9px; right: 20px; display: flex; align-items: flex-end; }
.accept svg { width: 36px; height: 28px; }
.cancel { margin-bottom: -13px; }
.cancel svg { width: 20px; height: 20px; }
.taskpane { position: absolute; top: 20px; right: 0; display: grid; width: 16px; overflow: hidden; border: 1px solid #aaa; border-right: 0; }
.taskpane button { height: 18px; padding-left: 2px; border-bottom: 1px solid #aaa; background: #d3d3d3; }
.taskpane .active { background: #fff; }
.taskpane svg { width: 15px; height: 15px; }
```
